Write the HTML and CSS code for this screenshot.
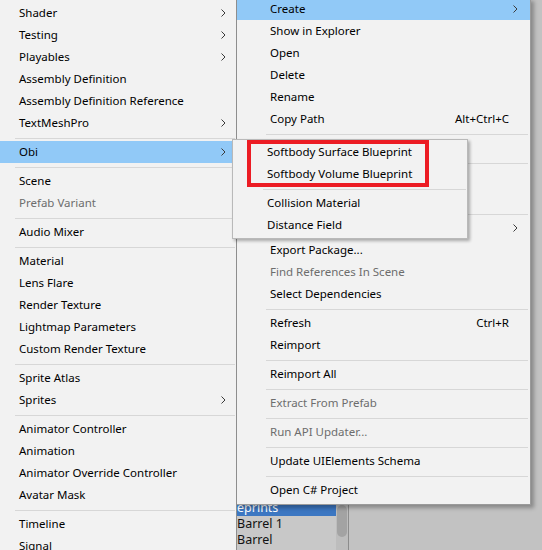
FILE: index.html
```html
<!DOCTYPE html>
<html>
<head>
<meta charset="utf-8">
<link rel="stylesheet" href="styles.css">
</head>
<body>
<div class="screen">
  <div class="menu menu-create">
    <div class="row"><span class="label">Shader</span><span class="chev"><svg width="5" height="8" viewBox="0 0 5 8"><polyline points="0.5,0.5 4,4 0.5,7.5" fill="none" stroke="#3a3a3a" stroke-width="1"/></svg></span></div>
    <div class="row"><span class="label">Testing</span><span class="chev"><svg width="5" height="8" viewBox="0 0 5 8"><polyline points="0.5,0.5 4,4 0.5,7.5" fill="none" stroke="#3a3a3a" stroke-width="1"/></svg></span></div>
    <div class="row"><span class="label">Playables</span><span class="chev"><svg width="5" height="8" viewBox="0 0 5 8"><polyline points="0.5,0.5 4,4 0.5,7.5" fill="none" stroke="#3a3a3a" stroke-width="1"/></svg></span></div>
    <div class="row"><span class="label">Assembly Definition</span></div>
    <div class="row"><span class="label">Assembly Definition Reference</span></div>
    <div class="row"><span class="label">TextMeshPro</span><span class="chev"><svg width="5" height="8" viewBox="0 0 5 8"><polyline points="0.5,0.5 4,4 0.5,7.5" fill="none" stroke="#3a3a3a" stroke-width="1"/></svg></span></div>
    <div class="sep"></div>
    <div class="row active"><span class="label">Obi</span><span class="chev"><svg width="5" height="8" viewBox="0 0 5 8"><polyline points="0.5,0.5 4,4 0.5,7.5" fill="none" stroke="#3a3a3a" stroke-width="1"/></svg></span></div>
    <div class="sep"></div>
    <div class="row"><span class="label">Scene</span></div>
    <div class="row disabled"><span class="label">Prefab Variant</span></div>
    <div class="sep"></div>
    <div class="row"><span class="label">Audio Mixer</span></div>
    <div class="sep"></div>
    <div class="row"><span class="label">Material</span></div>
    <div class="row"><span class="label">Lens Flare</span></div>
    <div class="row"><span class="label">Render Texture</span></div>
    <div class="row"><span class="label">Lightmap Parameters</span></div>
    <div class="row"><span class="label">Custom Render Texture</span></div>
    <div class="sep"></div>
    <div class="row"><span class="label">Sprite Atlas</span></div>
    <div class="row"><span class="label">Sprites</span><span class="chev"><svg width="5" height="8" viewBox="0 0 5 8"><polyline points="0.5,0.5 4,4 0.5,7.5" fill="none" stroke="#3a3a3a" stroke-width="1"/></svg></span></div>
    <div class="sep"></div>
    <div class="row"><span class="label">Animator Controller</span></div>
    <div class="row"><span class="label">Animation</span></div>
    <div class="row"><span class="label">Animator Override Controller</span></div>
    <div class="row"><span class="label">Avatar Mask</span></div>
    <div class="sep"></div>
    <div class="row"><span class="label">Timeline</span></div>
    <div class="row"><span class="label">Signal</span></div>
  </div>

  <div class="right-col">
    <div class="menu menu-context">
      <div class="row active"><span class="label">Create</span><span class="chev"><svg width="5" height="8" viewBox="0 0 5 8"><polyline points="0.5,0.5 4,4 0.5,7.5" fill="none" stroke="#3a3a3a" stroke-width="1"/></svg></span></div>
      <div class="row"><span class="label">Show in Explorer</span></div>
      <div class="row"><span class="label">Open</span></div>
      <div class="row"><span class="label">Delete</span></div>
      <div class="row"><span class="label">Rename</span></div>
      <div class="row"><span class="label">Copy Path</span><span class="shortcut">Alt+Ctrl+C</span></div>
      <div class="sep"></div>
      <div class="row"></div>
      <div class="sep"></div>
      <div class="row"></div>
      <div class="row"></div>
      <div class="sep"></div>
      <div class="row"><span class="label"></span><span class="chev"><svg width="5" height="8" viewBox="0 0 5 8"><polyline points="0.5,0.5 4,4 0.5,7.5" fill="none" stroke="#3a3a3a" stroke-width="1"/></svg></span></div>
      <div class="row"><span class="label">Export Package...</span></div>
      <div class="row disabled"><span class="label">Find References In Scene</span></div>
      <div class="row"><span class="label">Select Dependencies</span></div>
      <div class="sep"></div>
      <div class="row"><span class="label">Refresh</span><span class="shortcut">Ctrl+R</span></div>
      <div class="row"><span class="label">Reimport</span></div>
      <div class="sep"></div>
      <div class="row"><span class="label">Reimport All</span></div>
      <div class="sep"></div>
      <div class="row disabled"><span class="label">Extract From Prefab</span></div>
      <div class="sep"></div>
      <div class="row disabled"><span class="label">Run API Updater...</span></div>
      <div class="sep"></div>
      <div class="row"><span class="label">Update UIElements Schema</span></div>
      <div class="sep"></div>
      <div class="row"><span class="label">Open C# Project</span></div>
    </div>
    <div class="project">
      <div class="list">
        <div class="item selected">eprints</div>
        <div class="item">Barrel 1</div>
        <div class="item">Barrel</div>
      </div>
      <div class="scroll"><div class="thumb"></div></div>
    </div>
  </div>

  <div class="menu submenu">
    <div class="row"><span class="label">Softbody Surface Blueprint</span></div>
    <div class="row"><span class="label">Softbody Volume Blueprint</span></div>
    <div class="sep"></div>
    <div class="row"><span class="label">Collision Material</span></div>
    <div class="row"><span class="label">Distance Field</span></div>
  </div>

  <div class="annotation"></div>
</div>
</body>
</html>
```
FILE: styles.css
```css
* { box-sizing: border-box; }
html, body {
  margin: 0;
  padding: 0;
  background: #c2c2c2;
}
.screen {
  position: relative;
  width: 542px;
  height: 550px;
  overflow: hidden;
  display: flex;
  align-items: flex-start;
  font-family: "Noto Sans", "Noto Sans CJK KR", sans-serif;
  font-size: 11.5px;
  color: #000;
}
.menu {
  background: #f2f2f2;
}
.row {
  height: 22px;
  display: flex;
  align-items: center;
  white-space: nowrap;
  padding-bottom: 1px;
}
.row .label { flex: 1; }
.row.active { background: #91c9f7; }
.row.disabled { color: #6d6d6d; }
.chev {
  display: flex;
  align-items: center;
}
.chev svg { display: block; }
.sep {
  height: 7px;
  padding-top: 4px;
}
.sep::before {
  content: "";
  display: block;
  height: 1px;
  background: #d7d7d7;
}

/* Create submenu (left) */
.menu-create {
  width: 237px;
  height: 550px;
  flex: none;
  padding-top: 2px;
  border-right: 1px solid #8e8e8e;
  position: relative;
  z-index: 2;
}
.menu-create .row { padding-left: 19px; padding-right: 10px; }
.menu-create .sep { margin: 0 1px 0 15px; }

/* Context menu (right) */
.right-col {
  width: 305px;
  flex: none;
  display: flex;
  flex-direction: column;
}
.menu-context {
  width: 294px;
  margin-top: -2px;
  padding-bottom: 3px;
  border-right: 1px solid #9a9a9a;
  border-bottom: 1px solid #9a9a9a;
  box-shadow: 3px 3px 4px rgba(0, 0, 0, 0.3);
  position: relative;
  z-index: 1;
}
.menu-context .row { padding-left: 33px; padding-right: 12px; }
.menu-context .sep { margin: 0 2px 0 29px; }
.shortcut { margin-right: 9px; }

/* Project panel below */
.project {
  margin-top: -5px;
  height: 60px;
  display: flex;
  font-family: "Noto Sans", sans-serif;
  font-size: 12.5px;
  color: #111;
}
.list {
  width: 99px;
  background: #c8c8c8;
}
.item {
  height: 16px;
  line-height: 16px;
  white-space: nowrap;
  overflow: hidden;
}
.item.selected {
  background: #3c77c2;
  color: #fff;
}
.scroll {
  width: 13px;
  background: #bdbdbd;
  border-right: 1px solid #8c8c8c;
  padding: 5px 1px 0 1px;
}
.thumb {
  height: 32px;
  background: #a3a3a3;
  border-radius: 5px;
}

/* Obi submenu overlay */
.submenu {
  position: absolute;
  left: 232px;
  top: 139px;
  width: 236px;
  padding: 1px 0 2px 0;
  border: 1px solid #b9b9b9;
  box-shadow: 2px 2px 3px rgba(0, 0, 0, 0.3);
  z-index: 5;
}
.submenu .row { padding-left: 34px; padding-right: 10px; }
.submenu .sep { margin: 0 1px 0 30px; }

/* Red annotation box */
.annotation {
  position: absolute;
  left: 247px;
  top: 140px;
  width: 182px;
  height: 47px;
  border: 4px solid #ec1c24;
  z-index: 6;
}
```
